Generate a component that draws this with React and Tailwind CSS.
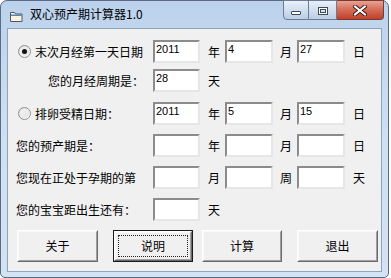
import React from 'react'

const cjk = {fontFamily: '"Noto Sans CJK SC", "Noto Sans", sans-serif'}
const num = {fontFamily: '"Liberation Sans", Arial, sans-serif'}

const Radio = ({checked}) => (
  <span className="relative flex h-[13px] w-[13px] items-center justify-center rounded-full border border-[#8f8f8f] bg-gradient-to-br from-[#dcdcdc] to-[#ffffff]">
    <span className="flex h-[9px] w-[9px] items-center justify-center rounded-full bg-gradient-to-br from-[#f4f4f4] to-[#e2e2e2]">
      {checked && <span className="h-[5px] w-[5px] rounded-full bg-[#111]" />}
    </span>
  </span>
)

const Field = ({value, w = 'w-[48px]'}) => (
  <div
    className={`${w} h-[23px] shrink-0 border-2 border-t-[#8c8c8c] border-l-[#8c8c8c] border-r-[#e6e6e6] border-b-[#e6e6e6] bg-white pl-[1px] pt-[1px] text-[11px] leading-[13px] text-black`}
    style={num}
  >
    {value}
  </div>
)

const Unit = ({children, w = 'w-[25px]', pl = 'pl-[8px]'}) => (
  <div className={`${w} ${pl} shrink-0 text-[12px] leading-none text-black`} style={cjk}>
    {children}
  </div>
)

const DateRow = ({label, values, second = '月', third = '日', className}) => (
  <div className={`flex h-[23px] items-center ${className}`}>
    {label}
    <Field value={values[0]} w="w-[47px]" />
    <Unit>年</Unit>
    <Field value={values[1]} />
    <Unit w="w-[24px]" pl="pl-[7px]">{second}</Unit>
    <Field value={values[2]} />
    <Unit>{third}</Unit>
  </div>
)

const Button = ({children, isDefault, className}) => (
  <div className={`h-[32px] shrink-0 ${isDefault ? 'border border-[#1a1a1a]' : ''} ${className}`}>
    <div className="flex h-full w-full items-center justify-center border border-t-white border-l-white border-r-[#6a6a6a] border-b-[#6a6a6a] bg-[#f0f0f0]">
      <div className="flex h-full w-full items-center justify-center border border-t-[#f8f8f8] border-l-[#f8f8f8] border-r-[#a0a0a0] border-b-[#a0a0a0] p-[2px]">
        <div
          className={`flex h-full w-full items-center justify-center text-[12px] leading-none text-black ${isDefault ? 'border border-dotted border-[#222]' : ''}`}
          style={cjk}
        >
          {children}
        </div>
      </div>
    </div>
  </div>
)

const TitleIcon = () => (
  <svg width="13" height="11" viewBox="0 0 13 11" className="mt-[10px] shrink-0">
    <path d="M0.5 1.5h4l1 1.5h6.5v7.5h-11.5z" fill="#f7f3e6" stroke="#555" />
    <rect x="1" y="3.5" width="10.5" height="1.5" fill="#5b84b8" />
  </svg>
)

export default function App() {
  return (
    <div className="h-[278px] w-[391px] bg-white">
      <div className="flex h-[278px] w-[389px] flex-col rounded-t-[7px] rounded-b-[5px] border border-[#5a6b82] bg-gradient-to-b from-[#bcd2ec] via-[#cfe0f3] to-[#d3e3f4]">
        {/* title bar */}
        <div className="flex h-[27px] shrink-0 items-start pl-[9px] pr-[4px]">
          <TitleIcon />
          <div className="ml-[7px] mt-[6px] flex-1 text-[12px] leading-[14px] text-black" style={cjk}>
            双心预产期计算器1.0
          </div>
          <div className="-mt-px flex h-[20px]">
            <div className="flex w-[26px] items-end justify-center rounded-bl-[4px] border border-[#6b7d96] bg-gradient-to-b from-[#e9f0f9] via-[#d2dfee] to-[#bccde3] pb-[4px]">
              <span className="h-[4px] w-[10px] rounded-[1px] border border-[#3d4a5c] bg-white" />
            </div>
            <div className="flex w-[28px] items-center justify-center border border-l-0 border-[#6b7d96] bg-gradient-to-b from-[#e9f0f9] via-[#d2dfee] to-[#bccde3]">
              <span className="mt-[1px] flex h-[8px] w-[10px] items-center justify-center border border-[#3d4a5c] bg-white">
                <span className="h-[4px] w-[6px] border border-[#3d4a5c] bg-[#dbe5f1]" />
              </span>
            </div>
            <div className="flex w-[47px] items-center justify-center rounded-br-[4px] border border-l-0 border-[#7a3a30] bg-gradient-to-b from-[#e7a294] via-[#d36a55] to-[#c23f28]">
              <svg width="14" height="11" viewBox="0 0 14 11">
                <path d="M2 1.5L12 9.5M12 1.5L2 9.5" stroke="#3d1a14" strokeWidth="4" strokeLinecap="square" />
                <path d="M2 1.5L12 9.5M12 1.5L2 9.5" stroke="#ffffff" strokeWidth="2" strokeLinecap="square" />
              </svg>
            </div>
          </div>
        </div>

        {/* client area */}
        <div className="mx-[6px] mb-[5px] flex flex-1 flex-col border border-[#8ea3bc] bg-[#f0f0f0]">
          <DateRow
            className="mt-[11px]"
            values={['2011', '4', '27']}
            label={
              <div className="flex w-[145px] shrink-0 items-center pl-[10px]">
                <Radio checked />
                <span className="ml-[4px] text-[12px] leading-none text-black" style={cjk}>末次月经第一天日期</span>
              </div>
            }
          />

          <div className="mt-[6px] flex h-[23px] items-center">
            <div className="w-[145px] shrink-0 pl-[40px] text-[12px] leading-none text-black" style={cjk}>
              您的月经周期是：
            </div>
            <Field value="28" w="w-[47px]" />
            <Unit>天</Unit>
          </div>

          <DateRow
            className="mt-[10px]"
            values={['2011', '5', '15']}
            label={
              <div className="flex w-[145px] shrink-0 items-center pl-[10px]">
                <Radio />
                <span className="ml-[4px] text-[12px] leading-none text-black" style={cjk}>排卵受精日期：</span>
              </div>
            }
          />

          <DateRow
            className="mt-[9px]"
            values={['', '', '']}
            label={
              <div className="w-[145px] shrink-0 pl-[8px] text-[12px] leading-none text-black" style={cjk}>
                您的预产期是：
              </div>
            }
          />

          <div className="mt-[9px] flex h-[23px] items-center">
            <div className="w-[145px] shrink-0 pl-[8px] text-[12px] leading-none text-black" style={cjk}>
              您现在正处于孕期的第
            </div>
            <Field value="" w="w-[47px]" />
            <Unit>月</Unit>
            <Field value="" />
            <Unit w="w-[24px]" pl="pl-[7px]">周</Unit>
            <Field value="" />
            <Unit>天</Unit>
          </div>

          <div className="mt-[9px] flex h-[23px] items-center">
            <div className="w-[145px] shrink-0 pl-[8px] text-[12px] leading-none text-black" style={cjk}>
              您的宝宝距出生还有：
            </div>
            <Field value="" w="w-[47px]" />
            <Unit>天</Unit>
          </div>

          <div className="mt-[9px] flex">
            <Button className="ml-[9px] w-[81px]">关于</Button>
            <Button isDefault className="ml-[15px] w-[80px]">说明</Button>
            <Button className="ml-[9px] w-[80px]">计算</Button>
            <Button className="ml-[15px] w-[81px]">退出</Button>
          </div>
        </div>
      </div>
    </div>
  )
}
